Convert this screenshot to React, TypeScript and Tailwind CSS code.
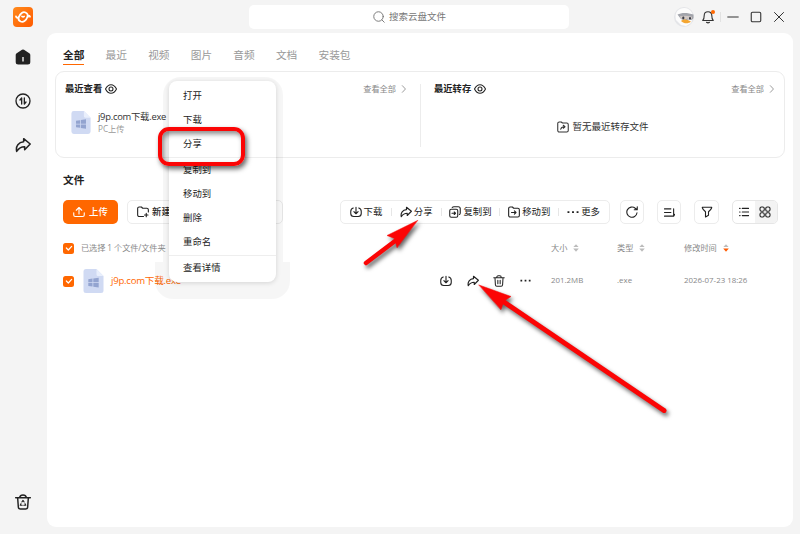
import type { ReactNode } from 'react';
import clsx from 'clsx';

function Icon({ children, className, width = 1.9 }: { children: ReactNode; className?: string; width?: number }) {
  return (
    <svg
      viewBox="0 0 24 24"
      fill="none"
      stroke="currentColor"
      strokeWidth={width}
      strokeLinecap="round"
      strokeLinejoin="round"
      className={clsx('shrink-0', className)}
    >
      {children}
    </svg>
  );
}

type IconProps = { className?: string };

const ShareIcon = ({ className }: IconProps) => (
  <Icon className={className} width={2.3}>
    <path d="M13 2.500 22.800 10.500 14.500 19V14.600C9 14.500 5.500 17 2.500 21.500 .8 13.500 5.500 7.800 13 7.200Z" />
  </Icon>
);

const DownloadIcon = ({ className }: IconProps) => (
  <Icon className={className} width={2.2}>
    <path d="M6.500 4C3.500 5 1.500 7.500 1.500 11v4a6 6 0 0 0 6 6h9a6 6 0 0 0 6-6v-4c0-3.500-2-6-5-7" />
    <path d="M12 2.500v12.500M7.800 11.300 12 15.500l4.200-4.200" />
  </Icon>
);

const UploadIcon = ({ className }: IconProps) => (
  <Icon className={className} width={2.2}>
    <path d="M12 16V3M6.500 8.500 12 3l5.500 5.500M1.500 13.500V18a3 3 0 0 0 3 3h15a3 3 0 0 0 3-3v-4.500" />
  </Icon>
);

const CopyIcon = ({ className }: IconProps) => (
  <Icon className={className} width={2.2}>
    <rect x="1.500" y="6.500" width="16" height="16" rx="3" />
    <path d="M6.500 3C7.200 2 8.500 1.500 10 1.500h8.500a4 4 0 0 1 4 4V14c0 1.500-.6 2.500-1.700 3" />
    <path d="M6 14.500h7M10.500 12l2.500 2.500-2.500 2.500" />
  </Icon>
);

const MoveIcon = ({ className }: IconProps) => (
  <Icon className={className} width={2.2}>
    <path d="M1.300 5a3 3 0 0 1 3-3h4.500l2.500 2.500h8.400a3 3 0 0 1 3 3V19a3 3 0 0 1-3 3H4.300a3 3 0 0 1-3-3Z" />
    <path d="M7 13h9M12.800 9.800 16 13l-3.200 3.200" />
  </Icon>
);

const NewFolderIcon = ({ className }: IconProps) => (
  <Icon className={className} width={2.2}>
    <path d="M13 21H4.300a3 3 0 0 1-3-3V5a3 3 0 0 1 3-3h4.500l2.500 2.500h8.400a3 3 0 0 1 3 3V12M18.500 14.500v7M15 18h7" />
  </Icon>
);

const SavedIcon = ({ className }: IconProps) => (
  <Icon className={className} width={2.1}>
    <path d="M1.500 5a3 3 0 0 1 3-3h4l2.500 2h8.500a3 3 0 0 1 3 3v12a3 3 0 0 1-3 3h-15a3 3 0 0 1-3-3Z" />
    <path d="M7.500 16.500c.5-3.500 3-5 7.500-5M12.500 8.500l3.500 3-3.500 3" />
  </Icon>
);

const TrashIcon = ({ className }: IconProps) => (
  <Icon className={className} width={2.1}>
    <path d="M1.500 5.500h21M7.500 5C7.500 3 8.500 1.500 10.500 1.500h3c2 0 3 1.500 3 3.500M4 6l.8 13.500c.1 1.800 1.200 3 3 3h8.400c1.800 0 2.900-1.200 3-3L20 6M9.700 10.500v7M14.300 10.500v7" />
  </Icon>
);

const MoreIcon = ({ className }: IconProps) => (
  <Icon className={className} width={0}>
    <path fill="currentColor" d="M1 10.300h3.800v3.800H1zM10.100 10.300h3.800v3.800h-3.800zM19.200 10.300H23v3.800h-3.800z" />
  </Icon>
);

const EyeIcon = ({ className }: IconProps) => (
  <Icon className={className} width={2.1}>
    <path d="M1 12C4 6 7.500 3.500 12 3.500s8 2.500 11 8.500c-3 6-6.500 8.500-11 8.500S4 18 1 12Z" />
    <circle cx="12" cy="12" r="4" />
  </Icon>
);

function FileIcon({ className }: IconProps) {
  return (
    <svg viewBox="0 0 20 24" className={clsx('shrink-0', className)}>
      <path d="M2.500 0H13l7 7v14.500a2.500 2.500 0 0 1-2.500 2.500h-15A2.500 2.500 0 0 1 0 21.500v-19A2.500 2.500 0 0 1 2.500 0Z" fill="#d0daf3" />
      <path d="M13 0l7 7h-5.500A1.500 1.500 0 0 1 13 5.500Z" fill="#e9effc" />
      <path d="M4.800 10.200 9 9.600v3.600H4.800ZM9.800 9.500 15.200 8.700v4.500H9.800ZM4.800 14H9v3.600l-4.200-.6ZM9.800 14h5.400v4.500l-5.400-.8Z" fill="#93a4d0" />
    </svg>
  );
}

function Checkbox() {
  return (
    <span className="flex size-[11px] shrink-0 items-center justify-center rounded-[2.500px] bg-[#ff6700] text-white">
      <Icon className="size-[8px]" width={3.6}>
        <path d="M4 12l6 6L20 7" />
      </Icon>
    </span>
  );
}

function Sorter({ active }: { active?: boolean }) {
  return (
    <svg viewBox="0 0 6 8" className="h-[8px] w-[6px]">
      <path d="M3 .3 5.600 3H.4Z" fill="#bbb" />
      <path d="M3 7.700 5.800 4.500H.2Z" fill={active ? '#ff5a00' : '#bbb'} />
    </svg>
  );
}

function ViewAll() {
  return (
    <a className="flex items-center gap-[3px] text-[8.200px] text-[#888]">
      查看全部
      <Icon className="size-[10px]" width={2}>
        <path d="M8 4l7.500 8L8 20" />
      </Icon>
    </a>
  );
}

const tabs = ['全部', '最近', '视频', '图片', '音频', '文档', '安装包'];

const menu = [['打开', '下载', '分享'], ['复制到', '移动到', '删除', '重命名'], ['查看详情']];

const actions = [
  { label: '下载', icon: DownloadIcon, width: 'w-[50px]' },
  { label: '分享', icon: ShareIcon, width: 'w-[50px]' },
  { label: '复制到', icon: CopyIcon, width: 'w-[59px]' },
  { label: '移动到', icon: MoveIcon, width: 'w-[59px]' },
  { label: '更多', icon: MoreIcon, width: 'w-[50px]' },
];

function Sidebar() {
  return (
    <aside className="flex w-[47px] shrink-0 flex-col items-center pt-[7px] pr-px pb-[24px] text-[#222]">
      <svg viewBox="0 0 20 20" className="size-[20px]">
        <defs>
          <linearGradient id="logo" x1="0" y1="0" x2="1" y2="1">
            <stop offset="0" stopColor="#ff8a1c" />
            <stop offset="1" stopColor="#ff5a00" />
          </linearGradient>
        </defs>
        <rect width="20" height="20" rx="4" fill="url(#logo)" />
        <g fill="none" stroke="#fff" strokeWidth="1.800" strokeLinecap="round">
          <path d="M3 9.300C3.300 11 5 11.300 6 9.800 7.200 6.300 10 4.400 12.500 5.500c1.800.8 2.700 2.300 2.200 4.500" />
          <path d="M17 9.700C16.500 8.300 15 8.500 14.300 10.200c-1.200 3.500-4 5.300-6.600 4.300-1.700-.7-2.500-2-2.200-3.800" />
          <path d="M8.900 9.300c.8.700 1.600.7 2.300.1" strokeWidth="1.600" />
        </g>
      </svg>
      <svg viewBox="0 0 16 16" className="mt-[22px] size-[16px]">
        <path d="M7 .8a2 2 0 0 1 2 0l5.300 3.400A2 2 0 0 1 15.300 6v7a2.500 2.500 0 0 1-2.500 2.500H3.200A2.500 2.500 0 0 1 .7 13V6a2 2 0 0 1 1-1.800Z" fill="#222" />
        <path d="M8 8v4.500" stroke="#fff" strokeWidth="1.300" />
      </svg>
      <Icon className="mt-[28px] size-[16px]" width={2}>
        <circle cx="12" cy="12" r="10.500" />
        <path d="M10 16.500V7.500L7.500 10.500M14 7.500v9l2.500-3" />
      </Icon>
      <ShareIcon className="mt-[28px] size-[16px]" />
      <Icon className="mt-auto size-[16px]" width={2.200}>
        <path d="M1 5.500h22M7 5C7.500 2.500 9 1.500 12 1.500s4.500 1 5 3.500M4 6l1 13.500c.1 1.800 1.200 3 3 3h8c1.800 0 2.900-1.200 3-3L20 6" />
        <path d="M10.300 12l1.700-2.500 1.700 2.500M9 14.500 7.800 17h3M15 14.500l1.200 2.500h-3" strokeWidth={1.6} />
      </Icon>
    </aside>
  );
}

function TitleBar() {
  return (
    <header className="flex h-[33px] shrink-0 items-center pt-px">
      <div className="ml-[202px] flex h-[24px] w-[320px] items-center justify-center gap-[4px] rounded-[5px] bg-white pl-px text-[9.500px] text-[#777]">
        <Icon className="size-[12px]" width={1.9}>
          <circle cx="11" cy="11" r="9.500" />
          <path d="M18 18l4.500 4.500" />
        </Icon>
        搜索云盘文件
      </div>
      <div className="ml-[105px] flex items-center text-[#333]">
        <svg viewBox="0 0 20 20" className="size-[20px]">
          <circle cx="10" cy="10" r="10" fill="#e4e5e8" />
          <path d="M2 13C0 5 5 .8 10.500 1c5 .2 8.500 4 8.300 9.500L17 16l-5 3-5-1Z" fill="#fcfcfc" />
          <path d="M3.500 7.500c4-2.300 10.500-2 16 0v3.500c-1 2-3 2.600-5 1.500-3 1.400-6 1-8-1Z" fill="#a2a4ab" />
          <path d="M6 9.300c4-1 8-.6 12 .4v1.500c-1.500 1.500-3 1.500-4.500.3-2.500 1.500-5 1-7-.5Z" fill="#d0c8c5" />
          <ellipse cx="9.300" cy="11" rx="1.100" ry="1.400" fill="#383b45" />
          <ellipse cx="16" cy="11.200" rx="1" ry="1.300" fill="#383b45" />
          <path d="M7 14c2.500-2.200 6-2 10 .8-3.200 2.200-7 2-10-.8Z" fill="#f4a631" />
        </svg>
        <span className="relative ml-[7px]">
          <Icon className="size-[14px]" width={1.9}>
            <path d="M3 18h18c-2-2-2.500-4-2.500-8.500 0-4-2.500-6.500-6.500-6.500S5.500 5.500 5.500 9.500c0 4.500-.5 6.500-2.500 8.500ZM9.500 21c1.500 1.300 3.500 1.300 5 0" />
          </Icon>
          <span className="absolute top-0 right-0 size-[4px] rounded-full bg-[#ff6700]" />
        </span>
        <span className="ml-[5px] h-[10px] w-px bg-[#e2e2e2]" />
        <Icon className="ml-[6px] size-[12px]" width={2}>
          <path d="M1.500 12h21" />
        </Icon>
        <Icon className="ml-[11px] size-[12px]" width={2.200}>
          <rect x="2.500" y="2.500" width="19" height="19" rx="2.500" />
        </Icon>
        <Icon className="ml-[11px] size-[12px]" width={2}>
          <path d="M3 3l18 18M21 3 3 21" />
        </Icon>
      </div>
    </header>
  );
}

function RecentCard() {
  return (
    <section className="mx-[8px] mt-[6px] flex h-[87px] shrink-0 rounded-[9px] border border-[#ececec]">
      <div className="w-[364px] pt-[11px] pl-[9px]">
        <div className="flex h-[12px] items-center justify-between pr-[11px]">
          <h2 className="flex items-center gap-[3px] text-[9.300px] font-bold text-[#222]">
            最近查看
            <EyeIcon className="size-[12px]" />
          </h2>
          <ViewAll />
        </div>
        <div className="mt-[16px] flex gap-[7px] pl-[6px]">
          <FileIcon className="h-[23px] w-[20px]" />
          <div>
            <p className="text-[9.400px] leading-[12px] tracking-[-0.250px] text-[#333]">j9p.com下载.exe</p>
            <p className="text-[8.200px] leading-[12px] text-[#999]">PC上传</p>
          </div>
        </div>
      </div>
      <div className="mt-[12px] h-[63px] w-px bg-[#ececec]" />
      <div className="flex-1 pt-[11px] pl-[13px]">
        <div className="flex h-[12px] items-center justify-between pr-[7px]">
          <h2 className="flex items-center gap-[3px] text-[9.300px] font-bold text-[#222]">
            最近转存
            <EyeIcon className="size-[12px]" />
          </h2>
          <ViewAll />
        </div>
        <div className="mt-[25px] flex h-[14px] items-center justify-center gap-[3px] pr-[12px] text-[9.500px] text-[#333]">
          <SavedIcon className="size-[12px]" />
          暂无最近转存文件
        </div>
      </div>
    </section>
  );
}

function Toolbar() {
  const box = 'flex h-[24px] items-center justify-center rounded-[5px] border border-[#ececec]';
  return (
    <div className="mt-[12px] flex h-[24px] pl-[16px] text-[9.400px] text-[#222]">
      <button className="flex h-[24px] w-[55px] items-center justify-center gap-[4px] rounded-[5px] bg-[#ff6700] font-medium text-white">
        <UploadIcon className="size-[12px]" />
        上传
      </button>
      <button className="ml-[9px] flex h-[24px] w-[66px] items-center gap-[3px] rounded-[5px] border border-[#ececec] pl-[9px] font-medium">
        <NewFolderIcon className="size-[12px]" />
        新建
      </button>
      <button className={clsx(box, 'ml-[9px] w-[81px]')} />
      <div className={clsx(box, 'ml-[57px] w-[270px] pr-px')}>
        {actions.map(({ label, icon: Glyph, width }, i) => (
          <div key={label} className={clsx('flex items-center', width)}>
            {i > 0 && <span className="h-[8px] w-px shrink-0 bg-[#e6e6e6]" />}
            <div className="flex flex-1 items-center justify-center gap-[2px] whitespace-nowrap">
              <Glyph className="size-[12px]" />
              {label}
            </div>
          </div>
        ))}
      </div>
      <button className={clsx(box, 'ml-[10px] w-[24px]')}>
        <Icon className="size-[12px]" width={2.200}>
          <path d="M22 13.500A10.200 10.200 0 1 1 18.500 4.500L22 7M22.500 1.500V7.500H16.500" />
        </Icon>
      </button>
      <button className={clsx(box, 'ml-[13px] w-[24px]')}>
        <Icon className="size-[11px]" width={2.400}>
          <path d="M1 4h14M1 12h14M1 20h20M21 4v15.500M21 20l2.500-4" />
        </Icon>
      </button>
      <button className={clsx(box, 'ml-[13px] w-[25px]')}>
        <Icon className="size-[12px]" width={2.200}>
          <path d="M2.500 2.500h19c0 3-1 4.500-6.500 9v7L9 22V11.500C3.500 7 2.500 5.500 2.500 2.500Z" />
        </Icon>
      </button>
      <div className="ml-[13px] flex h-[24px] w-[46px] overflow-hidden rounded-[5px] border border-[#e6e6e6]">
        <span className="flex w-[22px] items-center justify-center">
          <Icon className="size-[10px]" width={2.900}>
            <path d="M8 3.500h15M8 12h15M8 20.500h15M1.500 3.500h1M1.500 12h1M1.500 20.500h1" />
          </Icon>
        </span>
        <span className="flex flex-1 items-center justify-center bg-[#f3f3f3] pr-[2px]">
          <Icon className="size-[12px]" width={2.200}>
            <rect x="2" y="2" width="8.500" height="8.500" rx="3" />
            <rect x="13.500" y="2" width="8.500" height="8.500" rx="3" />
            <rect x="2" y="13.500" width="8.500" height="8.500" rx="3" />
            <rect x="13.500" y="13.500" width="8.500" height="8.500" rx="3" />
          </Icon>
        </span>
      </div>
    </div>
  );
}

function FileTable() {
  return (
    <div className="pl-[16px] text-[8.200px] text-[#888]">
      <div className="mt-[17px] flex h-[14px] items-center">
        <Checkbox />
        <span className="ml-[7px] w-[470px]">
          <span className="tracking-[-0.080px]">已选择 1 个文件/文件夹</span>
        </span>
        <span className="flex w-[66px] items-center gap-[6px]">大小 <Sorter /></span>
        <span className="flex w-[67px] items-center gap-[6px]">类型 <Sorter /></span>
        <span className="flex items-center gap-[6px]">修改时间 <Sorter active /></span>
      </div>
      <div className="mt-[14px] flex h-[24px] items-center text-[7.900px]">
        <Checkbox />
        <FileIcon className="ml-[9px] h-[24px] w-[21px]" />
        <span className="ml-[7px] w-[329px] text-[9.600px] tracking-[-0.250px] text-[#ff6700]">j9p.com下载.exe</span>
        <span className="flex w-[111px] gap-[14.500px] text-[#222]">
          <DownloadIcon className="size-[12px]" />
          <ShareIcon className="size-[12px]" />
          <TrashIcon className="size-[12px]" />
          <MoreIcon className="size-[11px]" />
        </span>
        <span className="w-[66px]">201.2MB</span>
        <span className="w-[67px]">.exe</span>
        <span>2026-07-23 18:26</span>
      </div>
    </div>
  );
}

function ContextMenu() {
  return (
    <>
      <div className="absolute top-[77px] left-[163px] h-[185px] w-[120px] rounded-t-[18px] bg-black/[0.035]" />
      <div className="absolute top-[262px] left-[155px] h-[37px] w-[135px] rounded-b-[18px] bg-black/[0.035]" />
      <div className="absolute top-[81px] left-[169px] flex h-[201px] w-[107px] flex-col rounded-[8px] bg-white pt-[3px] shadow-[0_1px_5px_rgba(0,0,0,0.14)]">
        {menu.map((group, i) => (
          <ul key={i} className={clsx('text-[9.400px] text-[#222]', i > 0 && 'mt-px border-t border-[#eee]')}>
            {group.map((item) => (
              <li key={item} className="flex h-[24px] items-center pl-[14px]">
                {item}
              </li>
            ))}
          </ul>
        ))}
      </div>
    </>
  );
}

/* Red frame and arrows pointing at the three share entries */
function Callouts() {
  return (
    <>
      <div className="absolute top-[127px] left-[158px] h-[39px] w-[87px] rounded-[11px] border-[4.500px] border-[#fb0505] shadow-[2px_3px_5px_rgba(0,0,0,0.6),inset_2px_3px_5px_rgba(0,0,0,0.45)]" />
      <svg viewBox="0 0 800 534" className="pointer-events-none absolute inset-0 h-[534px] w-[800px] drop-shadow-[2px_3px_2px_rgba(0,0,0,0.6)]">
        <g stroke="#fb0505" strokeLinecap="round" fill="#fb0505">
          <path d="M366 263 399 238" strokeWidth="4.500" />
          <path d="M417.500 220.500 387 235.500 394.500 238.500 397 247.500Z" strokeWidth=".5" />
          <path d="M664 410.500 501 300" strokeWidth="5" />
          <path d="M479 285 511 296.500 504 301 501 309.500Z" strokeWidth=".5" />
        </g>
      </svg>
    </>
  );
}

export default function App() {
  return (
    <div className="relative flex h-[534px] w-[800px] overflow-hidden bg-[#f4f4f4] font-['Open_Sans','Noto_Sans_CJK_SC',sans-serif]">
      <Sidebar />
      <div className="flex w-[753px] flex-col">
        <TitleBar />
        <main className="h-[494px] w-[746px] rounded-[9px] bg-white">
          <nav className="flex gap-[21.200px] pt-[14px] pl-[16px] text-[10.700px] text-[#999]">
            {tabs.map((tab, i) => (
              <span
                key={tab}
                className={clsx(
                  'h-[18px] border-b-[1.500px] leading-[16px]',
                  i === 0 ? 'border-[#ff6700] font-bold text-[#222]' : 'border-transparent',
                )}
              >
                {tab}
              </span>
            ))}
          </nav>
          <RecentCard />
          <h2 className="mt-[14px] pl-[16px] text-[10.700px] leading-[16px] font-bold text-[#222]">文件</h2>
          <Toolbar />
          <FileTable />
        </main>
      </div>
      <ContextMenu />
      <Callouts />
    </div>
  );
}
